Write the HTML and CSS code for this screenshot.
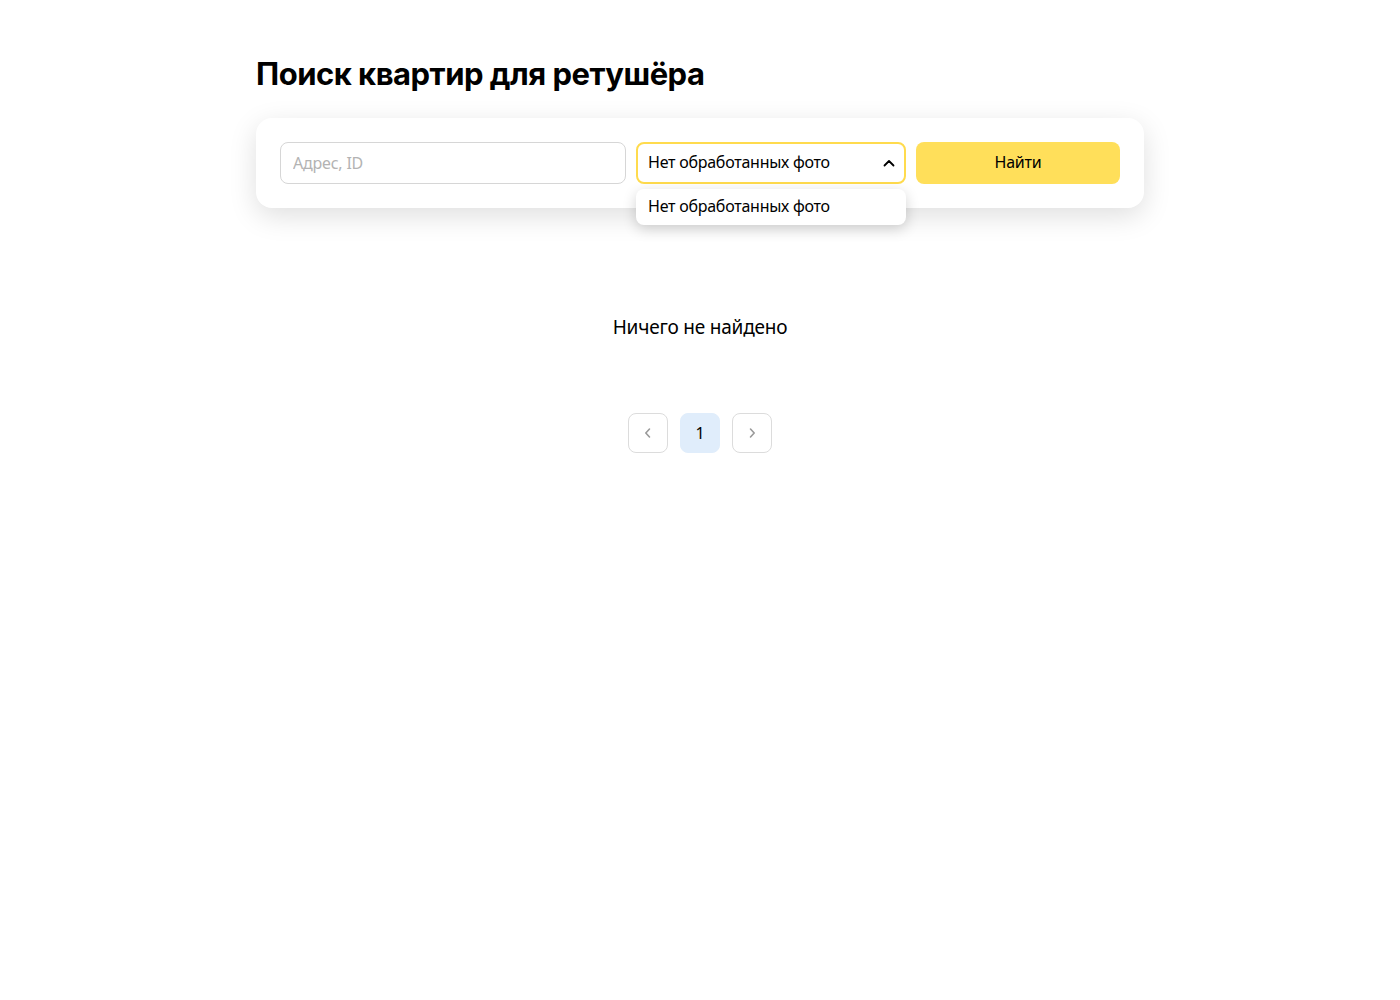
FILE: index.html
```html
<!DOCTYPE html>
<html lang="ru">
<head>
<meta charset="utf-8">
<title>Поиск квартир для ретушёра</title>
<link rel="stylesheet" href="styles.css">
</head>
<body>
<main class="page">
  <h1 class="title">Поиск квартир для ретушёра</h1>
  <section class="card">
    <input class="input" type="text" placeholder="Адрес, ID">
    <div class="select-wrap">
      <div class="select">
        <span class="select-text">Нет обработанных фото</span>
        <svg class="chevron" width="14" height="14" viewBox="0 0 14 14"><path d="M2.5 9.5 L7 5 L11.5 9.5" fill="none" stroke="#000" stroke-width="1.8" stroke-linecap="round" stroke-linejoin="round"/></svg>
      </div>
      <div class="menu">
        <div class="menu-item">Нет обработанных фото</div>
      </div>
    </div>
    <button class="btn">Найти</button>
  </section>
  <p class="empty">Ничего не найдено</p>
  <nav class="pager">
    <button class="page-btn"><svg width="16" height="16" viewBox="0 0 16 16"><path d="M9.5 4 L5.8 8 L9.5 12" fill="none" stroke="#9a9a9a" stroke-width="1.6" stroke-linecap="round" stroke-linejoin="round"/></svg></button>
    <button class="page-btn current">1</button>
    <button class="page-btn"><svg width="16" height="16" viewBox="0 0 16 16"><path d="M6.5 4 L10.2 8 L6.5 12" fill="none" stroke="#9a9a9a" stroke-width="1.6" stroke-linecap="round" stroke-linejoin="round"/></svg></button>
  </nav>
</main>
</body>
</html>
```
FILE: styles.css
```css
* { box-sizing: border-box; }
html, body { margin: 0; background: #fff; }
body { font-family: "Noto Sans", "Open Sans", sans-serif; color: #000; }
.page { width: 888px; margin: 0 auto; padding-top: 52px; }
.title { margin: 0 0 22px; font-family: "Inter", "Noto Sans", sans-serif; font-size: 31px; font-weight: 700; line-height: 44px; letter-spacing: -0.5px; }
.card { display: flex; gap: 10px; padding: 24px; background: #fff; border-radius: 16px; box-shadow: 0 8px 28px rgba(0,0,0,0.13); }
.input { width: 346px; height: 42px; border: 1px solid #d6d6d6; border-radius: 8px; padding: 0 12px; font: inherit; font-size: 16px; letter-spacing: -0.2px; outline: none; }
.input::placeholder { color: #b3b3b3; }
.select-wrap { position: relative; width: 270px; }
.select { height: 42px; border: 2px solid #ffdb4d; border-radius: 8px; display: flex; align-items: center; justify-content: space-between; padding: 0 8px 2px 10px; font-size: 16px; letter-spacing: -0.25px; }
.chevron { display: block; margin-top: 2px; }
.menu { position: absolute; top: 47px; left: 0; width: 270px; background: #fff; border-radius: 8px; box-shadow: 0 4px 14px rgba(0,0,0,0.18); padding: 5px 0 7px; z-index: 2; }
.menu-item { padding: 0 12px; font-size: 16px; line-height: 24px; letter-spacing: -0.25px; }
.btn { width: 204px; height: 42px; background: #ffdf5a; border: none; border-radius: 8px; font: inherit; font-size: 16px; color: #000; letter-spacing: -0.2px; padding: 0 0 2px; }
.empty { text-align: center; font-size: 19px; margin: 104px 0 0; line-height: 30px; letter-spacing: -0.2px; }
.pager { display: flex; justify-content: center; gap: 12px; margin-top: 71px; }
.page-btn { width: 40px; height: 40px; border: 1px solid #dcdcdc; border-radius: 8px; background: #fff; display: flex; align-items: center; justify-content: center; font: inherit; font-size: 16px; padding: 0; color: #000; }
.page-btn.current { background: #e0edfb; border-color: #e0edfb; }
```
